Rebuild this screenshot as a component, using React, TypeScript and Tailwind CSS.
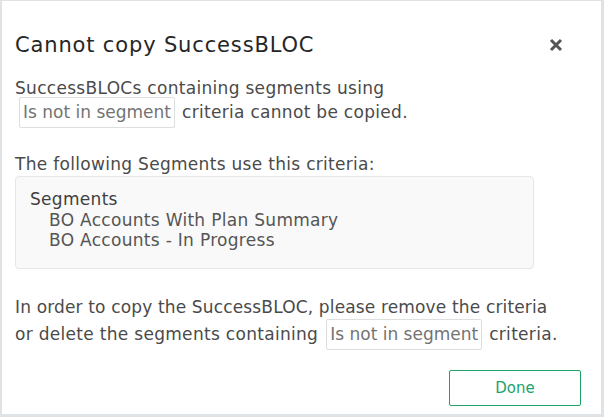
import React from "react"

const font = { fontFamily: '"DejaVu Sans", "Open Sans", sans-serif' }

function Chip({ children }: { children: React.ReactNode }) {
  return (
    <span className="inline-flex items-center h-[31px] px-[3px] border border-[#dedede] rounded-[2px] text-[#737373] tracking-normal">
      {children}
    </span>
  )
}

export default function App() {
  return (
    <div
      className="h-[417px] w-[604px] bg-[#dfe3e6] pt-px pl-[2px] pr-[3px] pb-[3px]"
      style={font}
    >
      <div className="h-full bg-white px-[13px] flex flex-col text-[17px] tracking-[0.3px] text-[#4a4a4a]">
        {/* Header */}
        <div className="flex items-center justify-between pt-[30px] h-[58px]">
          <h1 className="text-[21px] leading-[28px] tracking-[0.85px] text-[#262626]">
            Cannot copy SuccessBLOC
          </h1>
          <button className="mr-[25px] text-[#555]" aria-label="Close">
            <svg width="14" height="14" viewBox="0 0 14 14">
              <path d="M2 2L12 12M12 2L2 12" stroke="currentColor" strokeWidth="3" />
            </svg>
          </button>
        </div>

        {/* Body */}
        <div className="mt-[21px] leading-[17px]">SuccessBLOCs containing segments using</div>
        <div className="flex items-center gap-[7px] ml-[4px]">
          <Chip>Is not in segment</Chip>
          <span>criteria cannot be copied.</span>
        </div>

        <div className="mt-[24px] leading-[24px]">The following Segments use this criteria:</div>
        <div className="w-[519px] h-[93px] rounded-[4px] border border-[#e6e6e6] bg-[#f9f9f9] pt-[11px] pl-[14px] leading-[20px] text-[#555]">
          <div className="leading-[22px] text-[#3f3f3f]">Segments</div>
          <div className="pl-[19px]">BO Accounts With Plan Summary</div>
          <div className="pl-[19px]">BO Accounts - In Progress</div>
        </div>

        <div className="mt-[26px] leading-[24px] tracking-[0.15px]">
          In order to copy the SuccessBLOC, please remove the criteria
        </div>
        <div className="flex items-center gap-[7px]">
          <span className="mr-[1px]">or delete the segments containing</span>
          <Chip>Is not in segment</Chip>
          <span>criteria.</span>
        </div>

        <div className="mt-auto mb-[8px] mr-[7px] flex justify-end">
          <button className="w-[132px] h-[36px] rounded-[2px] border border-[#1ea36a] text-[#1ea36a] text-[15px] tracking-normal">
            Done
          </button>
        </div>
      </div>
    </div>
  )
}
